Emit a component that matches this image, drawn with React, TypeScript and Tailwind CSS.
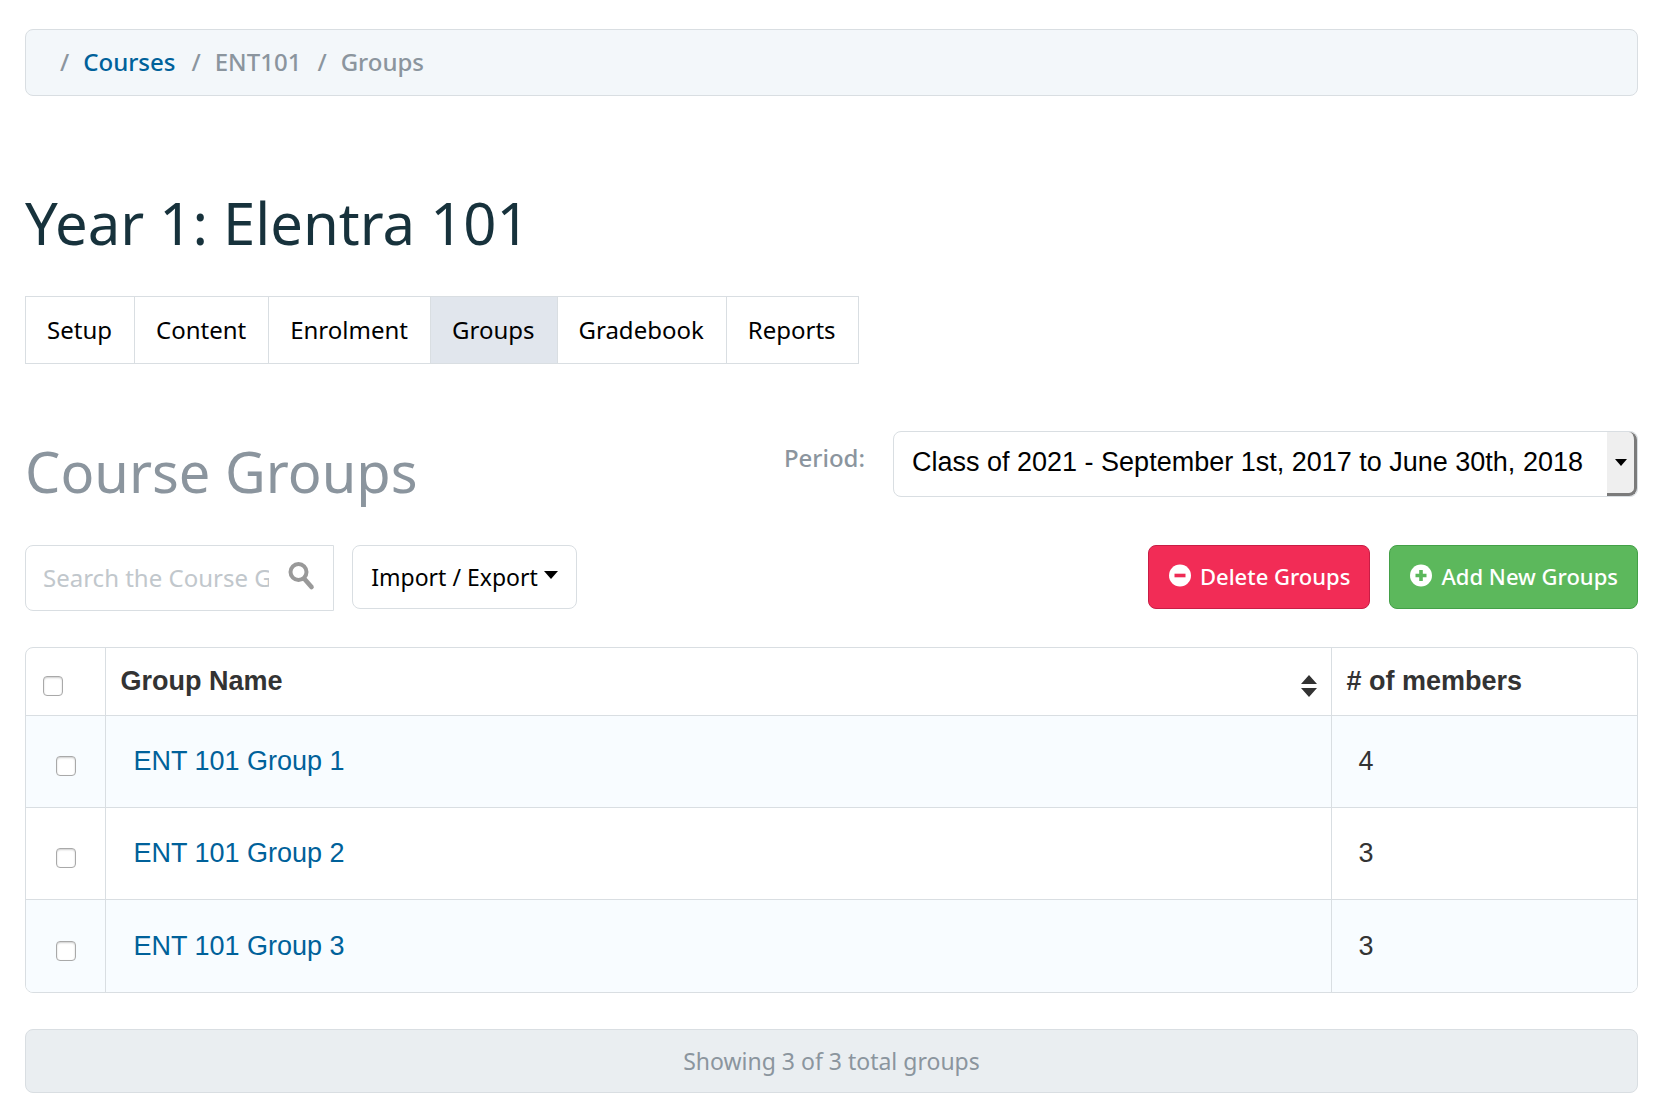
const sans = "font-['Noto_Sans','Open_Sans',sans-serif]";

const tabs = ["Setup", "Content", "Enrolment", "Groups", "Gradebook", "Reports"];

const groups = [
  { name: "ENT 101 Group 1", members: 4 },
  { name: "ENT 101 Group 2", members: 3 },
  { name: "ENT 101 Group 3", members: 3 },
];

function Checkbox({ label }: { label: string }) {
  return (
    <input
      type="checkbox"
      aria-label={label}
      className="mt-2 block size-5 appearance-none rounded border border-[#a9a9a9] bg-white shadow-[inset_0_1px_2px_rgba(0,0,0,0.2)] checked:bg-[#00619a]"
    />
  );
}

function CircleIcon({ plus }: { plus?: boolean }) {
  return (
    <svg viewBox="0 0 24 24" className="-mt-1 size-6 shrink-0" aria-hidden="true">
      <circle cx="12" cy="12.5" r="11" fill="#fff" />
      <path
        d={plus ? "M12 7v11M6.5 12.5h11" : "M6.5 12.5h11"}
        className={plus ? "stroke-[#5bb75b]" : "stroke-[#ee2b55]"}
        strokeWidth="3.6"
      />
    </svg>
  );
}

export default function App() {
  return (
    <main className={`${sans} min-h-screen bg-white pt-[29px] pr-6 pb-7 pl-[25px] text-2xl text-[#8b959e]`}>
      <nav
        aria-label="Breadcrumb"
        className="flex h-[67px] items-center rounded-lg border border-[#d9dee2] bg-[#f3f7fa] pb-0.5 pl-[34px] font-medium"
      >
        <ol className="flex items-center gap-4">
          <li className="flex gap-3.5">
            <span>/</span>
            <a href="#courses" className="text-[#00619a]">Courses</a>
          </li>
          <li className="flex gap-3.5">
            <span>/</span>
            <span>ENT101</span>
          </li>
          <li className="flex gap-3.5">
            <span>/</span>
            <span aria-current="page">Groups</span>
          </li>
        </ol>
      </nav>

      <h1 className="mt-[87px] text-[58px] leading-[80px] text-[#17323c]">Year 1: Elentra 101</h1>

      <nav aria-label="Course" className="mt-[33px] flex">
        <ul className="flex h-[68px] divide-x divide-[#d9dee2] border border-[#d9dee2]">
          {tabs.map((tab) => (
            <li key={tab} className="flex">
              <a
                href={`#${tab.toLowerCase()}`}
                aria-current={tab === "Groups" ? "page" : undefined}
                className="flex items-center pr-[22px] pl-[21px] text-black aria-[current=page]:bg-[#e1e6ed]"
              >
                {tab}
              </a>
            </li>
          ))}
        </ul>
      </nav>

      <div className="mt-[67px] flex items-start justify-between">
        <h2 className="text-[56px] leading-[80px]">Course Groups</h2>
        <div className="flex items-start gap-7">
          <label htmlFor="period" className="pt-[11px] font-medium">Period:</label>
          <div className="relative">
            <select
              id="period"
              className="h-[66px] w-[745px] appearance-none rounded-lg border border-[#d9dee2] bg-white pr-8 pb-0.5 pl-[18px] font-['Liberation_Sans',Arial,sans-serif] text-[27px] text-black"
            >
              <option>Class of 2021 - September 1st, 2017 to June 30th, 2018</option>
            </select>
            <span className="pointer-events-none absolute top-px right-px bottom-px flex w-[30px] items-center justify-center rounded-r-lg border-r-3 border-b-3 border-[#7b7b7b] bg-[#efefef]">
              <svg viewBox="0 0 12 7" className="h-[7px] w-3" aria-hidden="true">
                <path d="M0 0h12L6 7z" fill="#000" />
              </svg>
            </span>
          </div>
        </div>
      </div>

      <div className="mt-[34px] flex items-start justify-between">
        <div className="flex items-start gap-[18px]">
          <div className="flex h-[66px] w-[309px] items-center rounded-l-lg border border-[#d9dee2] pr-[18px] pl-[17px]">
            <input
              type="text"
              aria-label="Search the Course Groups"
              placeholder="Search the Course Groups"
              className="w-[226px] min-w-0 bg-transparent text-black outline-none placeholder:text-[#c1c7cc]"
            />
            <svg viewBox="0 0 28 32" className="-mt-1 ml-auto h-8 w-7" aria-hidden="true" fill="none" stroke="#999" strokeLinecap="round">
              <circle cx="11.5" cy="12" r="8" strokeWidth="4" />
              <path d="M17.5 19l7 8" strokeWidth="4.6" />
            </svg>
          </div>
          <button type="button" className="flex h-16 w-[225px] items-center justify-center gap-1.5 rounded-lg border border-[#d9dee2] text-[23px] text-black">
            Import / Export
            <svg viewBox="0 0 14 8" className="-mt-1 h-2 w-3.5" aria-hidden="true">
              <path d="M0 0h14L7 8z" fill="#000" />
            </svg>
          </button>
        </div>
        <div className="flex gap-[19px] text-[22px] font-medium text-white">
          <button type="button" className="flex h-16 items-center gap-2 rounded-lg border border-[#c81d45] bg-[#f22c56] px-[19px]">
            <CircleIcon />
            Delete Groups
          </button>
          <button type="button" className="flex h-16 items-center gap-2 rounded-lg border border-[#43a047] bg-[#5cb85c] px-[19px]">
            <CircleIcon plus />
            Add New Groups
          </button>
        </div>
      </div>

      <div className="mt-9 overflow-hidden rounded-lg border border-[#d9dee2] font-['Liberation_Sans',Arial,sans-serif] text-[27px] text-[#333]">
        <table className="w-full table-fixed">
          <colgroup>
            <col className="w-[79px]" />
            <col />
            <col className="w-[306px]" />
          </colgroup>
          <thead>
            <tr className="h-[67px] divide-x divide-[#d9dee2] text-left">
              <th className="pt-0.5 pl-[17px]">
                <Checkbox label="Select all groups" />
              </th>
              <th className="pt-0.5 pr-3.5 pl-[15px]" aria-sort="none">
                <button type="button" className="flex w-full items-center justify-between font-bold">
                  Group Name
                  <svg viewBox="0 0 16 22" className="mt-2 h-[22px] w-4" aria-hidden="true" fill="#333">
                    <path d="M8 0l8 9H0zM8 22l-8-9h16z" />
                  </svg>
                </button>
              </th>
              <th className="pt-0.5 pl-[15px]"># of members</th>
            </tr>
          </thead>
          <tbody>
            {groups.map((group) => (
              <tr
                key={group.name}
                className="h-[92px] divide-x divide-[#d9dee2] border-t border-[#d9dee2] last:h-[93px] odd:bg-[#f8fcff]"
              >
                <td className="pt-0.5 pl-[30px]">
                  <Checkbox label={`Select ${group.name}`} />
                </td>
                <td className="pt-0.5 pl-7">
                  <a href="#group" className="text-[#00619a]">{group.name}</a>
                </td>
                <td className="pt-0.5 pl-[27px]">{group.members}</td>
              </tr>
            ))}
          </tbody>
        </table>
      </div>

      <p className="mt-9 flex h-16 items-center justify-center rounded-lg border border-[#d9dee2] bg-[#eaeef1] text-[23px]">
        Showing 3 of 3 total groups
      </p>
    </main>
  );
}
